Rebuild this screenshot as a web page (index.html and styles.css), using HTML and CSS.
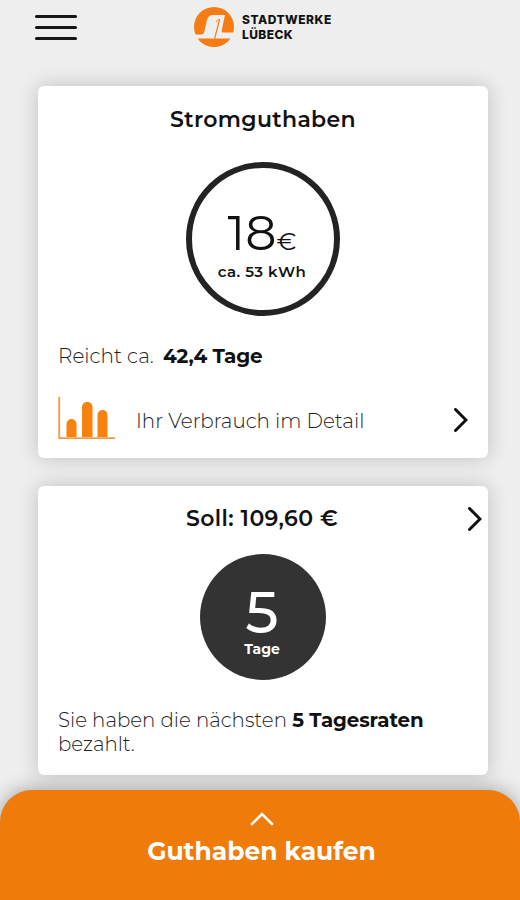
FILE: index.html
```html
<!DOCTYPE html>
<html lang="de">
<head>
  <meta charset="UTF-8" />
  <meta name="viewport" content="width=device-width, initial-scale=1.0"/>
  <title>Stadtwerke Lübeck</title>
  <link rel="stylesheet" href="styles.css">
</head>
<body>

  <header class="topbar">
    <button class="menu" aria-label="Menü">
      <span></span>
      <span></span>
      <span></span>
    </button>
    <div class="logo">
      <svg class="logo-mark" viewBox="0 0 40 40">
        <circle cx="20" cy="20" r="20" fill="#f57c14"/>
        <path d="M0 27.5H7C9 27.5 9.9 26.5 10.4 24.5L12.8 13.5C13.6 10 15.5 8 19 8H31L27.8 23C27.4 25 28 25.6 29.5 25.6H40V31.6H0Z" fill="#efeeee"/>
        <path d="M25.6 12.5L20.6 31.6" stroke="#f57c14" stroke-width="1.2"/>
        <path d="M25.8 12.6C23.6 12.6 22.6 13.2 22.2 15" fill="none" stroke="#f57c14" stroke-width="0.9"/>
      </svg>
      <div class="logo-text">
        <div class="logo-top">STADTWERKE</div>
        <div class="logo-bottom">LÜBECK</div>
      </div>
    </div>
  </header>

  <main class="cards">
    <section class="card balance">
      <h2 class="balance-title">Stromguthaben</h2>
      <div class="ring">
        <div class="amount"><span class="number">18</span><span class="euro">€</span></div>
        <div class="kwh">ca. 53 kWh</div>
      </div>
      <p class="range"><span class="range-label">Reicht ca.</span><b>42,4 Tage</b></p>
      <a class="detail">
        <svg class="chart" viewBox="0 0 58 44">
          <path d="M1.2 1V42.2H57" fill="none" stroke="#f19a4a" stroke-width="1.8"/>
          <path d="M8.5 41V28a5 5 0 0 1 10 0V41ZM24 41V11a5 5 0 0 1 10.5 0V41ZM39.5 41V19a5 5 0 0 1 10 0V41Z" fill="#f9820f"/>
        </svg>
        <span class="detail-text">Ihr Verbrauch im Detail</span>
        <svg class="chevron" viewBox="0 0 14 24"><path d="M1.5 1.5L12 12L1.5 22.5"/></svg>
      </a>
    </section>

    <section class="card debit">
      <div class="debit-head">
        <h2 class="debit-title">Soll: 109,60 €</h2>
        <svg class="chevron" viewBox="0 0 14 24"><path d="M1.5 1.5L12 12L1.5 22.5"/></svg>
      </div>
      <div class="disc">
        <div class="days">5</div>
        <div class="days-label">Tage</div>
      </div>
      <p class="paid"><span class="paid-text">Sie haben die nächsten</span> <b>5 Tagesraten</b><br><span class="paid-text">bezahlt.</span></p>
    </section>
  </main>

  <footer class="buy">
    <svg class="up" viewBox="0 0 24 14"><path d="M2 12L12 2L22 12"/></svg>
    <div class="buy-text">Guthaben kaufen</div>
  </footer>

</body>
</html>
```

FILE: styles.css
```css
* {
  box-sizing: border-box;
}
body {
  margin: 0;
  height: 900px;
  overflow: hidden;
  display: flex;
  flex-direction: column;
  background: #eeeeee;
  color: #111;
  font-family: Montserrat, Inter, sans-serif;
}
h2, p {
  margin: 0;
}
.topbar {
  display: flex;
  align-items: flex-start;
  height: 85.5px;
  padding: 7px 35px 0;
}
.menu {
  display: flex;
  flex-direction: column;
  gap: 8px;
  width: 42px;
  padding: 7.5px 0 0;
  border: none;
  background: none;
}
.menu span {
  height: 3px;
  border-radius: 2px;
  background: #161616;
}
.logo {
  display: flex;
  gap: 8px;
  margin-left: 117px;
}
.logo-mark {
  width: 40px;
  height: 40px;
}
.logo-text {
  padding-top: 6px;
  font-family: Inter, sans-serif;
  font-size: 12px;
  font-weight: 800;
  line-height: 14.5px;
  white-space: nowrap;
}
.logo-top {
  letter-spacing: 0.5px;
}
.logo-bottom {
  letter-spacing: 0.4px;
}
.cards {
  flex: 1;
  display: flex;
  flex-direction: column;
  gap: 28px;
  padding: 0 32px 0 38px;
}
.card {
  padding: 0 20px;
  background: #fff;
  border-radius: 6px;
  box-shadow: 0 0 20px rgba(0,0,0,0.2);
}
.balance {
  height: 372px;
  padding-top: 20px;
}
.balance-title, .debit-title {
  font-size: 22px;
  font-weight: 600;
  letter-spacing: 0.35px;
  line-height: 28px;
  text-align: center;
  white-space: nowrap;
}
.ring {
  width: 154px;
  height: 154px;
  margin: 28px auto 0;
  padding-top: 36px;
  border: 6px solid #232323;
  border-radius: 50%;
  text-align: center;
}
.amount {
  display: flex;
  justify-content: center;
  align-items: baseline;
  height: 58px;
  margin-left: -2px;
  line-height: 58px;
}
.number {
  font-size: 49px;
}
.euro {
  font-size: 25px;
}
.kwh {
  margin-left: -2px;
  font-size: 15px;
  font-weight: 600;
  letter-spacing: 0.45px;
  line-height: 20px;
}
.range {
  margin-top: 26px;
  font-size: 20px;
  line-height: 28px;
}
.range-label, .detail-text, .paid-text {
  color: #222;
  font-weight: 300;
}
.range-label {
  display: inline-block;
  width: 105px;
}
b {
  font-weight: 700;
  letter-spacing: -0.2px;
}
.detail {
  display: flex;
  align-items: center;
  margin-top: 26px;
}
.chart {
  width: 58px;
  height: 44px;
}
.detail-text {
  margin-left: 20px;
  padding-top: 6px;
  font-size: 19.9px;
  white-space: nowrap;
}
.chevron {
  width: 14px;
  height: 24px;
  margin: 4px 0 0 auto;
  fill: none;
  stroke: #111;
  stroke-width: 3;
  stroke-linecap: round;
}
.debit {
  height: 289.5px;
  padding-top: 19px;
}
.debit-head {
  display: grid;
  grid-template-columns: 14px 1fr 14px;
  margin-right: -14px;
  margin-left: -16px;
}
.debit-title {
  grid-column: 2;
  letter-spacing: 0.4px;
}
.debit-head .chevron {
  margin-top: 2px;
}
.disc {
  width: 126px;
  height: 126px;
  margin: 21px auto 0;
  padding-top: 31px;
  border-radius: 50%;
  background: #333;
  color: #fff;
  text-align: center;
}
.days {
  margin-left: -2px;
  font-size: 58px;
  font-weight: 500;
  line-height: 55px;
}
.days-label {
  margin-left: -2px;
  font-size: 14px;
  font-weight: 700;
  line-height: 18px;
}
.paid {
  margin-top: 28px;
  font-size: 19.8px;
  line-height: 24px;
  white-space: nowrap;
}
.paid b {
  letter-spacing: -0.1px;
}
.buy {
  height: 110px;
  padding: 22px 0 0 3px;
  border-radius: 32px 32px 0 0;
  background: #ef7b0b;
  box-shadow: 0 0 20px rgba(0,0,0,0.35);
  color: #fff;
  text-align: center;
}
.up {
  display: block;
  width: 24px;
  height: 14px;
  margin: 0 auto;
  fill: none;
  stroke: #fff;
  stroke-width: 2.6;
  stroke-linecap: round;
}
.buy-text {
  margin-top: 8px;
  font-size: 25px;
  font-weight: 700;
  line-height: 34px;
}
```
